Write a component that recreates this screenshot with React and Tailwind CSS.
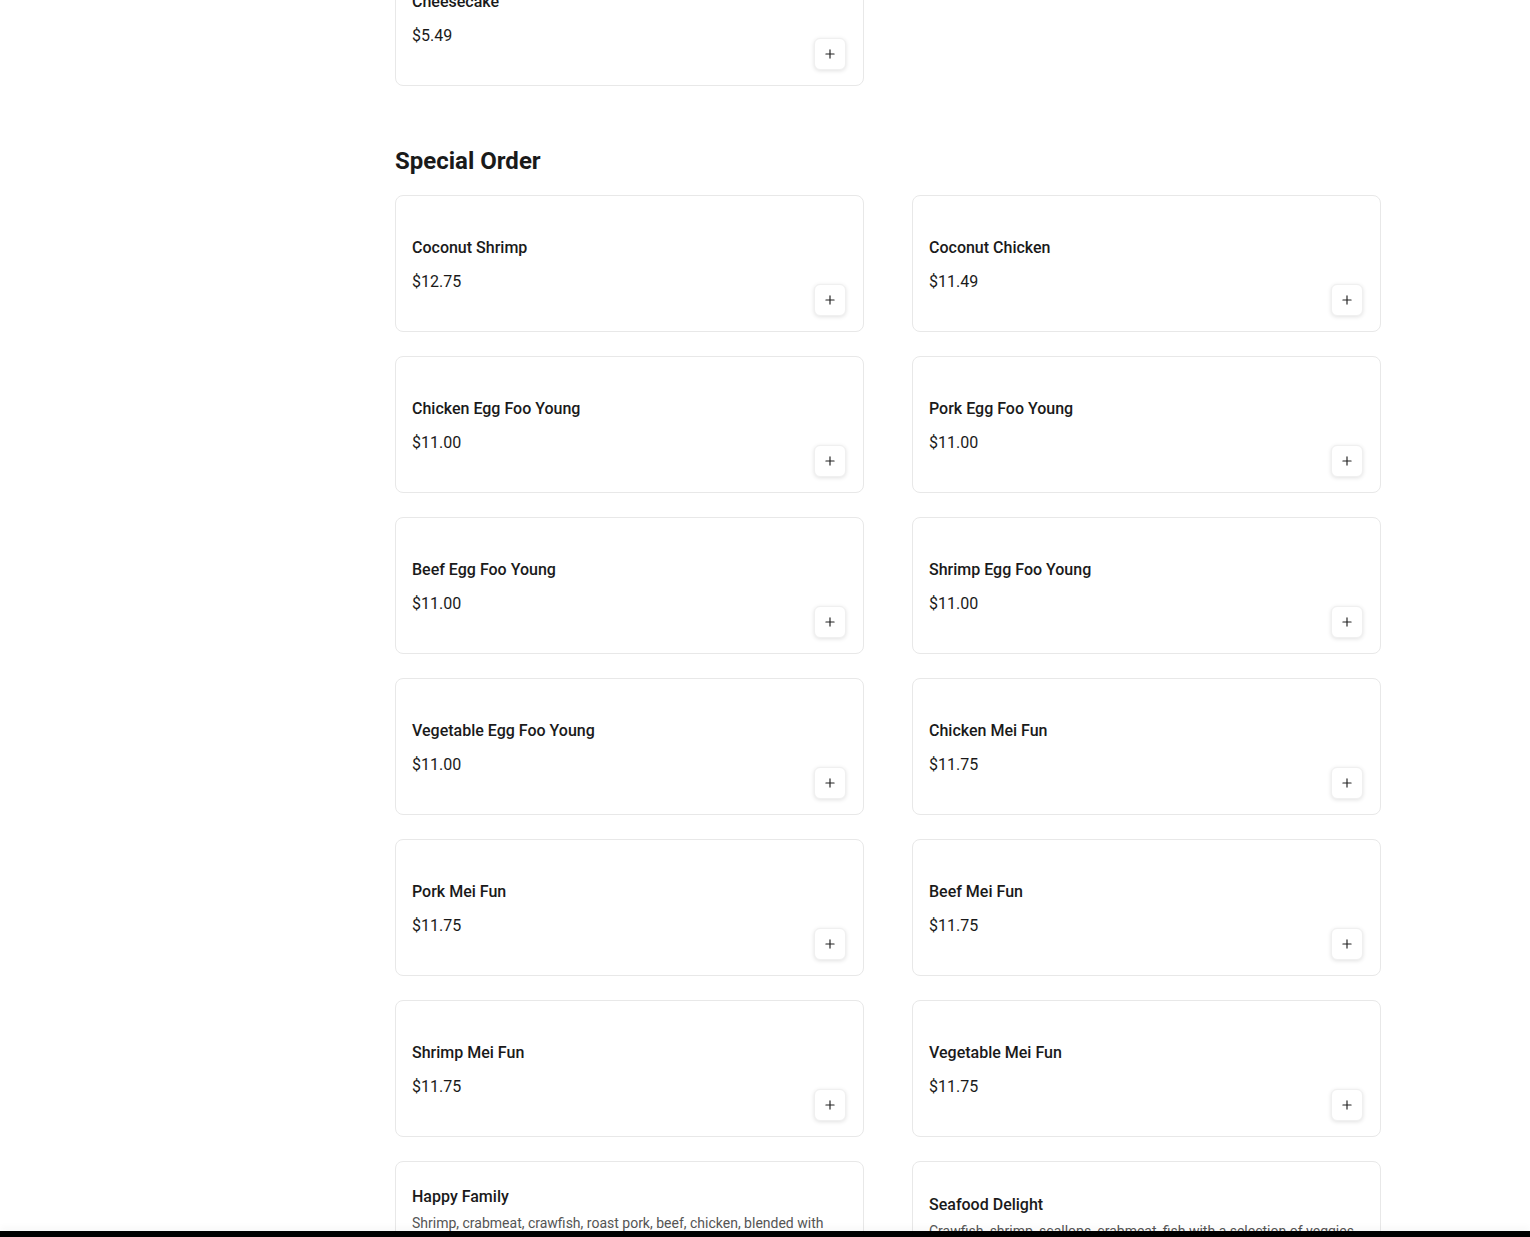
import { Plus } from 'lucide-react'

const specials = [
  { name: 'Coconut Shrimp', price: '12.75' },
  { name: 'Coconut Chicken', price: '11.49' },
  { name: 'Chicken Egg Foo Young', price: '11.00' },
  { name: 'Pork Egg Foo Young', price: '11.00' },
  { name: 'Beef Egg Foo Young', price: '11.00' },
  { name: 'Shrimp Egg Foo Young', price: '11.00' },
  { name: 'Vegetable Egg Foo Young', price: '11.00' },
  { name: 'Chicken Mei Fun', price: '11.75' },
  { name: 'Pork Mei Fun', price: '11.75' },
  { name: 'Beef Mei Fun', price: '11.75' },
  { name: 'Shrimp Mei Fun', price: '11.75' },
  { name: 'Vegetable Mei Fun', price: '11.75' },
  {
    name: 'Happy Family',
    price: '16.95',
    description:
      'Shrimp, crabmeat, crawfish, roast pork, beef, chicken, blended with mixed vegetables in our chef’s special brown sauce, served with white rice.',
  },
  {
    name: 'Seafood Delight',
    price: '17.95',
    description: 'Crawfish, shrimp, scallops, crabmeat, fish with a selection of veggies in a white sauce.',
  },
]

function MenuCard({ name, price, description }) {
  return (
    <div
      className={`relative flex flex-col justify-center ${description ? 'min-h-[168px]' : 'min-h-[137px]'} px-4 pt-[17px] pb-[15px] rounded-lg border border-[#e8e8e8] bg-white`}
    >
      <div className={name === 'Seafood Delight' ? 'pb-1' : ''}>
        <h3 className="text-base leading-6 font-medium text-[#1a1a1a]">{name}</h3>
        {description && (
          <p className="mt-1 text-sm leading-5 text-[#555]">{description}</p>
        )}
        <p className="mt-2.5 text-base leading-6 text-[#1a1a1a]">${price}</p>
      </div>
      <button className="absolute right-[17px] bottom-[15px] w-8 h-8 flex items-center justify-center rounded-md bg-white border border-[#f0f0f0] shadow-[0_1px_4px_rgba(0,0,0,0.12)] text-[#222]">
        <Plus size={14} strokeWidth={2} />
      </button>
    </div>
  )
}

export default function App() {
  return (
    <div className="h-screen overflow-hidden bg-white font-['Roboto',sans-serif]">
      <div className="max-w-7xl mx-auto px-6 flex gap-12 -mt-[51px]">
        <aside className="w-[198px] shrink-0" />
        <main className="flex-1 min-w-0">
          <section>
            <div className="grid grid-cols-2 gap-x-12 gap-y-6">
              <MenuCard name="Cheesecake" price="5.49" />
            </div>
          </section>
          <section className="mt-[59px]">
            <h2 className="text-2xl leading-8 font-bold text-[#1a1a1a] mb-[18px]">Special Order</h2>
            <div className="grid grid-cols-2 gap-x-12 gap-y-6">
              {specials.map((item) => (
                <MenuCard key={item.name} {...item} />
              ))}
            </div>
          </section>
        </main>
      </div>
      <div className="fixed bottom-0 left-0 right-0 h-[6px] bg-black shadow-[0_-4px_6px_rgba(0,0,0,0.03)]" />
    </div>
  )
}
